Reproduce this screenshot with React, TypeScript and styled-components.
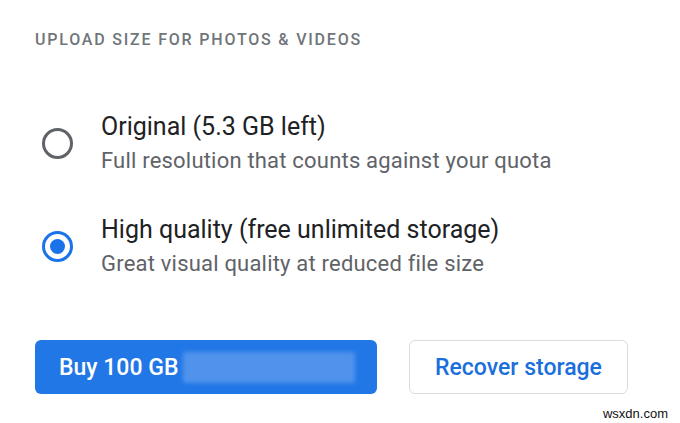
import React from 'react';
import styled, { createGlobalStyle } from 'styled-components';

const GlobalStyle = createGlobalStyle`
  html, body {
    margin: 0;
    padding: 0;
    background: #ffffff;
    font-family: Roboto, 'Liberation Sans', Arial, sans-serif;
  }
`;

const Page = styled.div`
  position: relative;
  width: 680px;
  height: 423px;
  padding: 30px 0 0 35px;
  box-sizing: border-box;
  overflow: hidden;
`;

const Heading = styled.div`
  font-size: 16px;
  font-weight: 500;
  letter-spacing: 1.8px;
  color: #70757a;
  line-height: 20px;
  white-space: nowrap;
`;

const OptionList = styled.div`
  display: flex;
  flex-direction: column;
  gap: 41px;
  margin-top: 62px;
`;

const Option = styled.label`
  display: flex;
  align-items: center;
  gap: 28px;
  padding-left: 7px;
  cursor: pointer;
`;

const Radio = styled.span<{ checked?: boolean }>`
  width: 25px;
  height: 25px;
  border-radius: 50%;
  border: 3px solid ${p => (p.checked ? '#1a73e8' : '#5f6368')};
  display: flex;
  align-items: center;
  justify-content: center;
  flex-shrink: 0;
  &::after {
    content: '';
    display: ${p => (p.checked ? 'block' : 'none')};
    width: 15px;
    height: 15px;
    border-radius: 50%;
    background: #1a73e8;
  }
`;

const OptionText = styled.div`
  display: flex;
  flex-direction: column;
  gap: 6px;
`;

const OptionTitle = styled.div`
  font-size: 25px;
  line-height: 30px;
  color: #202124;
  white-space: nowrap;
`;

const OptionSub = styled.div`
  font-size: 22px;
  line-height: 26px;
  letter-spacing: 0.2px;
  color: #5f6368;
  white-space: nowrap;
`;

const Actions = styled.div`
  display: flex;
  gap: 32px;
  margin-top: 63px;
`;

const Button = styled.button<{ primary?: boolean }>`
  height: 54px;
  border-radius: 6px;
  font-family: Roboto, 'Liberation Sans', Arial, sans-serif;
  font-size: 23px;
  font-weight: 500;
  display: flex;
  align-items: center;
  padding: 0 24px;
  box-sizing: border-box;
  white-space: nowrap;
  cursor: pointer;
  background: ${p => (p.primary ? '#2277e6' : '#ffffff')};
  color: ${p => (p.primary ? '#ffffff' : '#1a6fdc')};
  border: ${p => (p.primary ? 'none' : '1px solid #dadce0')};
`;

const Blurred = styled.span`
  display: inline-block;
  width: 172px;
  height: 31px;
  margin-left: auto;
  margin-right: -2px;
  background: #5093ec;
  filter: blur(2px);
  border-radius: 2px;
`;

const Watermark = styled.div`
  position: absolute;
  right: 12px;
  bottom: 2px;
  font-family: Arial, 'Liberation Sans', sans-serif;
  font-size: 13px;
  color: #111;
`;

export default function App() {
  return (
    <Page>
      <GlobalStyle />
      <Heading>UPLOAD SIZE FOR PHOTOS &amp; VIDEOS</Heading>
      <OptionList>
        <Option>
          <Radio />
          <OptionText>
            <OptionTitle>Original (5.3 GB left)</OptionTitle>
            <OptionSub>Full resolution that counts against your quota</OptionSub>
          </OptionText>
        </Option>
        <Option>
          <Radio checked />
          <OptionText>
            <OptionTitle>High quality (free unlimited storage)</OptionTitle>
            <OptionSub>Great visual quality at reduced file size</OptionSub>
          </OptionText>
        </Option>
      </OptionList>
      <Actions>
        <Button primary style={{ width: 342 }}>
          Buy 100 GB
          <Blurred />
        </Button>
        <Button style={{ width: 219, justifyContent: 'center' }}>Recover storage</Button>
      </Actions>
      <Watermark>wsxdn.com</Watermark>
    </Page>
  );
}
